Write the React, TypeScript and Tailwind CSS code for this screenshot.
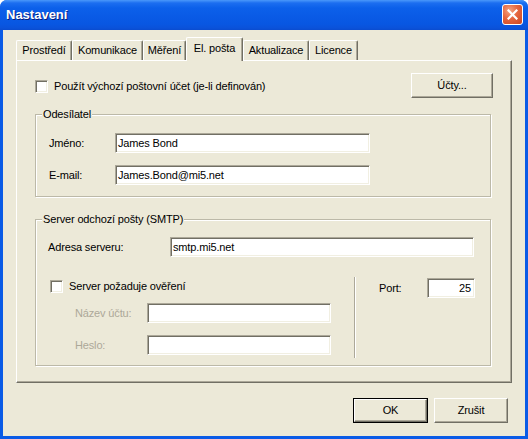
import React from "react";

const inputCls =
  "h-[20px] bg-white border border-t-[#ACA899] border-l-[#ACA899] border-b-white border-r-white shadow-[inset_1px_1px_0_#716F64,inset_-1px_-1px_0_#F1EFE2] px-[2px] flex items-center text-black";

function Checkbox() {
  return (
    <div className="w-[13px] h-[13px] shrink-0 bg-white border border-t-[#ACA899] border-l-[#ACA899] border-b-white border-r-white shadow-[inset_1px_1px_0_#716F64,inset_-1px_-1px_0_#F1EFE2]" />
  );
}

function Button({ label, def, w, h }: { label: string; def?: boolean; w: string; h: string }) {
  return (
    <div
      className={
        (def ? "border border-black " : "") +
        w +
        " " +
        h +
        " shrink-0"
      }
    >
      <div className="w-full h-full bg-[#ECE9D8] border border-t-white border-l-white border-b-[#716F64] border-r-[#716F64] shadow-[inset_-1px_-1px_0_#ACA899] flex items-center justify-center text-black">
        {label}
      </div>
    </div>
  );
}

function Tab({ label, w, selected }: { label: string; w: string; selected?: boolean }) {
  return (
    <div
      className={
        w +
        (selected
          ? " h-[24px] -mb-[1px] relative z-10 pb-[3px]"
          : " h-[20px] pb-[1px]") +
        " bg-[#ECE9D8] border-t border-l border-t-white border-l-white border-r border-r-[#716F64] shadow-[inset_-1px_0_0_#ACA899] rounded-t-[2px] flex items-center justify-center text-black"
      }
    >
      {label}
    </div>
  );
}

export default function App() {
  return (
    <div className="w-[528px] h-[439px] bg-white font-['Liberation_Sans','DejaVu_Sans',sans-serif] text-[11px] leading-[13px] tracking-[-0.15px] text-black">
      <div className="w-[528px] h-[439px] flex flex-col bg-[#0A5BE6] rounded-t-[7px] overflow-hidden">
        {/* Title bar */}
        <div className="h-[30px] shrink-0 flex items-center justify-between pl-[6px] pr-[5px] bg-[linear-gradient(to_bottom,#4A98FA_0px,#1C6EF0_3px,#0C60EA_8px,#0A5BE6_16px,#0857E2_24px,#0A52DA_28px,#0A4CCF_30px)]">
          <span className="text-white font-bold text-[13px] leading-[16px] tracking-normal font-['Liberation_Sans',sans-serif] [text-shadow:1px_1px_0_#0A1E7A] pb-[1px]">
            Nastavení
          </span>
          <div className="w-[21px] h-[21px] mb-[2px] rounded-[3px] border border-white bg-[radial-gradient(circle_at_35%_30%,#F4A482_0%,#E5663F_45%,#CC4520_100%)] flex items-center justify-center">
            <svg width="11" height="11" viewBox="0 0 11 11">
              <path d="M1.5 1.5 L9.5 9.5 M9.5 1.5 L1.5 9.5" stroke="white" strokeWidth="2.2" strokeLinecap="square" />
            </svg>
          </div>
        </div>

        {/* Body */}
        <div className="flex-1 mx-[3px] mb-[3px] bg-[#ECE9D8] flex flex-col pt-[7px] pl-[13px] pr-[13px]">
          {/* Tabs */}
          <div className="flex items-end pl-0">
            <Tab label="Prostředí" w="w-[56px]" />
            <Tab label="Komunikace" w="w-[71px]" />
            <Tab label="Měření" w="w-[43px]" />
            <Tab label="El. pošta" w="w-[57px]" selected />
            <Tab label="Aktualizace" w="w-[66px]" />
            <Tab label="Licence" w="w-[49px]" />
          </div>

          {/* Panel */}
          <div className="h-[323px] border border-t-white border-l-white border-b-[#716F64] border-r-[#716F64] shadow-[inset_-1px_-1px_0_#ACA899] flex flex-col pl-[18px] pr-[20px]">
            {/* Row 1 */}
            <div className="flex items-center justify-between mt-[12px]">
              <div className="flex items-center gap-[6px] mt-[1px]">
                <Checkbox />
                <span>Použít výchozí poštovní účet (je-li definován)</span>
              </div>
              <div className="mr-[-2px]">
                <Button label="Účty..." w="w-[82px]" h="h-[25px]" />
              </div>
            </div>

            {/* Group 1 */}
            <div className="relative mt-[16px] h-[83px] border border-[#BCB9A8] shadow-[inset_1px_1px_0_white,1px_1px_0_white] flex flex-col gap-[12px] pt-[18px] pl-[13px]">
              <span className="absolute left-[6px] top-[-7px] bg-[#ECE9D8] px-[1px]">Odesílatel</span>
              <div className="flex items-center">
                <span className="w-[66px]">Jméno:</span>
                <div className={inputCls + " w-[255px]"}>James Bond</div>
              </div>
              <div className="flex items-center">
                <span className="w-[66px]">E-mail:</span>
                <div className={inputCls + " w-[255px]"}>James.Bond@mi5.net</div>
              </div>
            </div>

            {/* Group 2 */}
            <div className="relative mt-[22px] h-[147px] border border-[#BCB9A8] shadow-[inset_1px_1px_0_white,1px_1px_0_white] flex flex-col pt-[17px]">
              <span className="absolute left-[6px] top-[-7px] bg-[#ECE9D8] px-[1px]">Server odchozí pošty (SMTP)</span>
              <div className="flex items-center pl-[12px]">
                <span className="w-[122px]">Adresa serveru:</span>
                <div className={inputCls + " w-[304px]"}>smtp.mi5.net</div>
              </div>
              <div className="flex mt-[20px] h-[81px]">
                <div className="w-[318px] flex flex-col pl-[14px] pt-[3px]">
                  <div className="flex items-center gap-[6px]">
                    <Checkbox />
                    <span>Server požaduje ověření</span>
                  </div>
                  <div className="flex items-center mt-[10px] pl-[25px]">
                    <span className="w-[72px] text-[#ACA899]">Název účtu:</span>
                    <div className={inputCls + " w-[184px]"}></div>
                  </div>
                  <div className="flex items-center mt-[12px] pl-[25px]">
                    <span className="w-[72px] text-[#ACA899]">Heslo:</span>
                    <div className={inputCls + " w-[184px]"}></div>
                  </div>
                </div>
                <div className="w-[2px] h-full border-l border-l-[#ACA899] border-r border-r-white" />
                <div className="flex items-start pl-[23px] pt-[1px]">
                  <div className="flex items-center">
                    <span className="w-[48px]">Port:</span>
                    <div className={inputCls + " w-[48px] justify-end pr-[3px]"}>25</div>
                  </div>
                </div>
              </div>
            </div>
          </div>

          {/* Bottom buttons */}
          <div className="flex justify-end gap-[6px] mt-[15px] pr-[4px]">
            <Button label="OK" def w="w-[75px]" h="h-[25px]" />
            <Button label="Zrušit" w="w-[74px]" h="h-[25px]" />
          </div>
        </div>
      </div>
    </div>
  );
}
